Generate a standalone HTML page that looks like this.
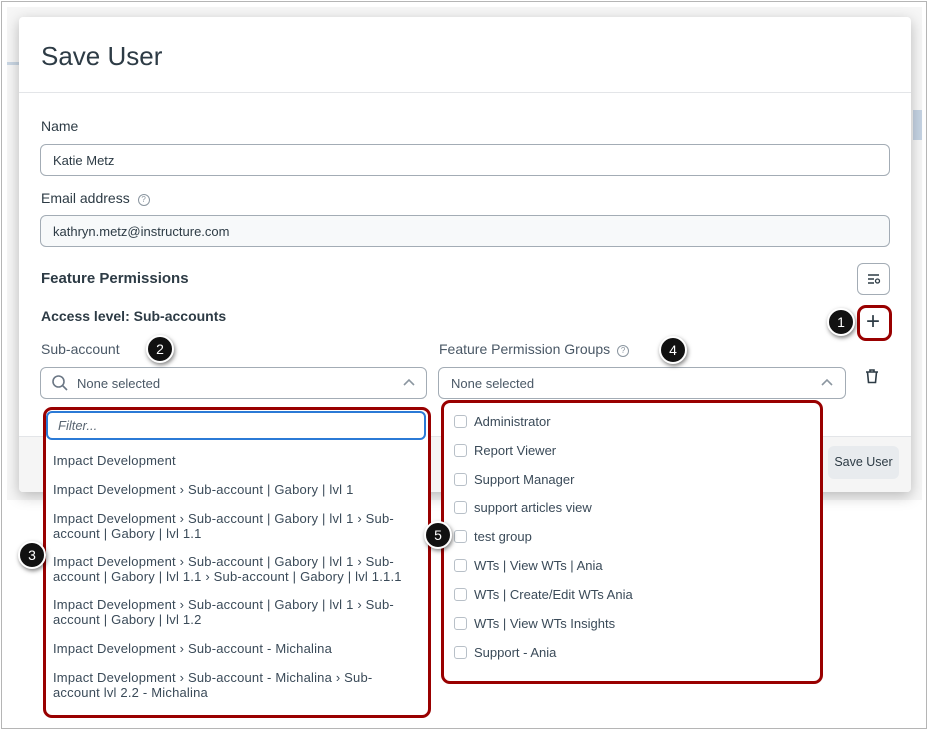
<!DOCTYPE html>
<html><head><meta charset="utf-8"><style>
*{box-sizing:border-box;margin:0;padding:0}
body{width:929px;height:731px;background:#fff;font-family:"Liberation Sans",sans-serif;color:#2d3b45;position:relative;overflow:hidden}
.frame{position:absolute;left:1px;top:1px;width:926px;height:728px;border:1px solid #b5b5b5}
.app{position:absolute;left:7px;top:7px;width:915px;height:493px;background:#f6f6f6}
.modal{position:absolute;left:19px;top:17px;width:892px;height:475px;background:#fff;border-radius:4px;box-shadow:0 4px 14px rgba(0,0,0,.25);overflow:hidden}
.abs{position:absolute}
.inp{position:absolute;border:1px solid #a3acb5;border-radius:6px;background:#fff;font-size:13px;padding-left:12px;display:flex;align-items:center}
.red{position:absolute;border:3px solid #990000;border-radius:9px}
.badge{position:absolute;width:28px;height:28px;border-radius:50%;background:#111;color:#fff;font-size:14px;display:flex;align-items:center;justify-content:center;border:2px solid #fff;box-shadow:1px 2px 4px rgba(0,0,0,.5)}
.li{position:absolute;left:53px;font-size:13px;line-height:15px;color:#3a4a58;letter-spacing:.2px}
.cb{position:absolute;left:454px;font-size:13px;color:#3a4a58;display:flex;align-items:center}
.cb i{display:inline-block;width:13px;height:13px;border:1px solid #b8c0c8;border-radius:3px;margin-right:7px}
</style></head><body>
<div class="frame"></div>
<div class="app">
 <div class="abs" style="left:0;top:55px;width:12px;height:3px;background:#c9d6e3"></div>
 <div class="abs" style="left:906px;top:103px;width:9px;height:30px;background:#c5d3e3"></div>
</div>
<div class="modal">
 <div class="abs" style="left:22px;top:24px;font-size:26px;color:#2d3b45">Save User</div>
 <div class="abs" style="left:0;top:75px;width:892px;height:1px;background:#e3e5e8"></div>
 <div class="abs" style="left:22px;top:101px;font-size:14px">Name</div>
 <div class="inp" style="left:21px;top:127px;width:850px;height:32px">Katie Metz</div>
 <div class="abs" style="left:22px;top:173px;font-size:14px">Email address <span style="display:inline-block;width:12px;height:12px;border:1px solid #8b96a0;border-radius:50%;font-size:8px;text-align:center;line-height:10px;color:#8b96a0;vertical-align:1px;margin-left:4px">?</span></div>
 <div class="inp" style="left:21px;top:198px;width:850px;height:32px;background:#f7f9fa">kathryn.metz@instructure.com</div>
 <div class="abs" style="left:22px;top:253px;font-size:15px;font-weight:bold">Feature Permissions</div>
 <div class="abs" style="left:838px;top:246px;width:33px;height:32px;border:1px solid #a3acb5;border-radius:6px"></div>
 <svg class="abs" style="left:848px;top:256px" width="14" height="12" viewBox="0 0 14 12"><path d="M1 2H12M1 6H7M1 10H7" stroke="#2d3b45" stroke-width="1.4"/><circle cx="10.5" cy="8" r="2" fill="none" stroke="#2d3b45" stroke-width="1.3"/></svg>
 <div class="abs" style="left:22px;top:291px;font-size:14px;font-weight:bold">Access level: Sub-accounts</div>
 <div class="abs" style="left:22px;top:324px;font-size:14px;color:#4a5866">Sub-account</div>
 <div class="abs" style="left:420px;top:324px;font-size:14px;color:#4a5866">Feature Permission Groups <span style="display:inline-block;width:12px;height:12px;border:1px solid #8b96a0;border-radius:50%;font-size:8px;text-align:center;line-height:10px;color:#8b96a0;vertical-align:1px;margin-left:3px">?</span></div>
 <div class="inp" style="left:21px;top:350px;width:387px;height:32px;padding-left:36px;color:#4a5866">None selected</div>
 <svg class="abs" style="left:32px;top:357px" width="18" height="18" viewBox="0 0 18 18"><circle cx="7.5" cy="7.5" r="5.5" fill="none" stroke="#6b7785" stroke-width="1.6"/><line x1="11.5" y1="11.5" x2="16" y2="16" stroke="#6b7785" stroke-width="1.6"/></svg>
 <svg class="abs" style="left:384px;top:361px" width="12" height="8"><path d="M1 7L6 2L11 7" fill="none" stroke="#8b96a0" stroke-width="1.6"/></svg>
 <div class="inp" style="left:419px;top:350px;width:408px;height:32px;color:#4a5866">None selected</div>
 <svg class="abs" style="left:802px;top:361px" width="12" height="8"><path d="M1 7L6 2L11 7" fill="none" stroke="#8b96a0" stroke-width="1.6"/></svg>
 <svg class="abs" style="left:846px;top:351px" width="14" height="16" viewBox="0 0 14 16"><path d="M1 4H13M5 4V2H9V4M2.5 4L3.5 14.5H10.5L11.5 4" fill="none" stroke="#2d3b45" stroke-width="1.6"/></svg>
 <div class="abs" style="left:0;top:419px;width:892px;height:56px;background:#f5f5f5;border-top:1px solid #e3e5e8"></div>
 <div class="abs" style="left:809px;top:429px;width:71px;height:33px;background:#e8ebee;border-radius:6px;font-size:12.5px;text-align:center;line-height:33px">Save User</div>
</div>
<div class="abs" style="left:866px;top:309px;font-size:24px;line-height:26px;color:#2d3b45">+</div>
<div class="red" style="left:857px;top:305px;width:35px;height:36px"></div>

<div class="abs" style="left:44px;top:408px;width:385px;height:308px;background:#fff;border-radius:8px"></div>
<div class="abs" style="left:46px;top:411px;width:380px;height:29px;border:2px solid #2b7ad6;border-radius:6px;font-size:13px;font-style:italic;color:#5a6672;padding:5px 10px">Filter...</div>
<div class="li" style="top:453px">Impact Development</div>
<div class="li" style="top:482px">Impact Development › Sub-account | Gabory | lvl 1</div>
<div class="li" style="top:511px">Impact Development › Sub-account | Gabory | lvl 1 › Sub-<br>account | Gabory | lvl 1.1</div>
<div class="li" style="top:554px">Impact Development › Sub-account | Gabory | lvl 1 › Sub-<br>account | Gabory | lvl 1.1 › Sub-account | Gabory | lvl 1.1.1</div>
<div class="li" style="top:597px">Impact Development › Sub-account | Gabory | lvl 1 › Sub-<br>account | Gabory | lvl 1.2</div>
<div class="li" style="top:641px">Impact Development › Sub-account - Michalina</div>
<div class="li" style="top:670px">Impact Development › Sub-account - Michalina › Sub-<br>account lvl 2.2 - Michalina</div>
<div class="red" style="left:43px;top:407px;width:388px;height:311px"></div>

<div class="abs" style="left:442px;top:401px;width:379px;height:281px;background:#fff;border-radius:8px;overflow:hidden"></div>
<div class="cb" style="top:414px"><i></i>Administrator</div>
<div class="cb" style="top:443px"><i></i>Report Viewer</div>
<div class="cb" style="top:472px"><i></i>Support Manager</div>
<div class="cb" style="top:500px"><i></i>support articles view</div>
<div class="cb" style="top:529px"><i></i>test group</div>
<div class="cb" style="top:558px"><i></i>WTs | View WTs | Ania</div>
<div class="cb" style="top:587px"><i></i>WTs | Create/Edit WTs Ania</div>
<div class="cb" style="top:616px"><i></i>WTs | View WTs Insights</div>
<div class="cb" style="top:645px"><i></i>Support - Ania</div>
<div class="red" style="left:441px;top:400px;width:382px;height:284px"></div>

<div class="badge" style="left:827px;top:308px">1</div>
<div class="badge" style="left:146px;top:335px">2</div>
<div class="badge" style="left:18px;top:541px">3</div>
<div class="badge" style="left:659px;top:336px">4</div>
<div class="badge" style="left:424px;top:521px">5</div>
</body></html>
